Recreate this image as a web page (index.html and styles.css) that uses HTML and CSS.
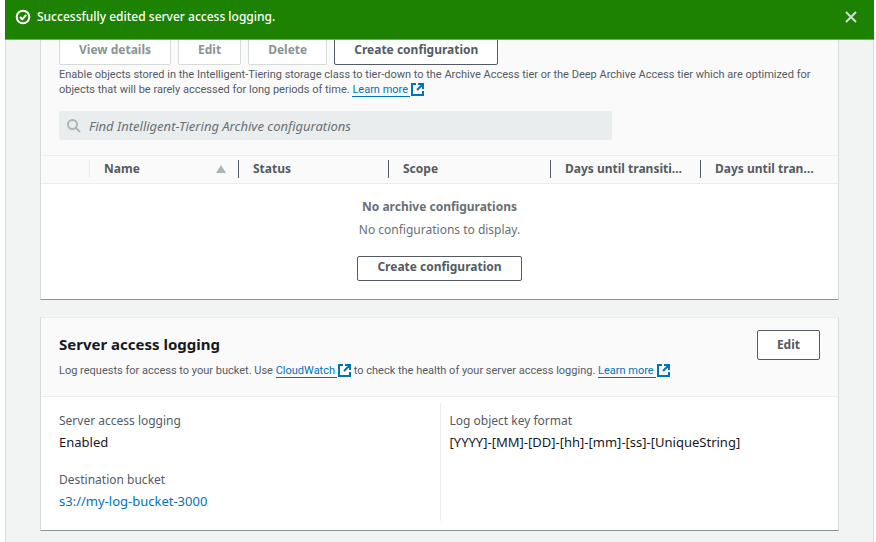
FILE: index.html
```html
<!DOCTYPE html>
<html lang="en">
<head>
  <meta charset="UTF-8" />
  <meta name="viewport" content="width=device-width, initial-scale=1.0" />
  <title>Bucket properties</title>
  <link rel="stylesheet" href="styles.css">
</head>
<body>
  <svg class="sprite" aria-hidden="true">
    <symbol id="external" viewBox="0 0 13 13">
      <path d="M5 1H1v11h11V8M7 1h5v5M12 1L6 7" />
    </symbol>
  </svg>

  <div class="flash" role="status">
    <svg class="flash-icon" viewBox="0 0 16 16">
      <circle cx="8" cy="8" r="6.3" />
      <path d="M5 8l2.300 2.300L11.200 5.800" />
    </svg>
    <span class="flash-text">Successfully edited server access logging.</span>
    <button class="flash-close" aria-label="Dismiss">
      <svg viewBox="0 0 12 12"><path d="M1 1l10 10M11 1L1 11" /></svg>
    </button>
  </div>

  <main class="page">
    <section class="card">
      <div class="card-header archive-header">
        <div class="actions">
          <button class="btn" disabled>View details</button>
          <button class="btn" disabled>Edit</button>
          <button class="btn" disabled>Delete</button>
          <button class="btn">Create configuration</button>
        </div>
        <p class="description">Enable objects stored in the Intelligent-Tiering storage class to tier-down to the Archive Access tier or the Deep Archive Access tier which are optimized for objects that will be rarely accessed for long periods of time. <a class="ext-link" href="#"><span>Learn more</span><svg><use href="#external" /></svg></a></p>
        <label class="search">
          <svg viewBox="0 0 14 14"><circle cx="5.500" cy="5.500" r="4.500" /><path d="M9 9l4 4" /></svg>
          <input type="search" aria-label="Find configurations" placeholder="Find Intelligent-Tiering Archive configurations">
        </label>
      </div>
      <table class="config-table">
        <colgroup>
          <col class="col-select"><col class="col-name"><col class="col-status"><col class="col-scope"><col class="col-days"><col>
        </colgroup>
        <thead>
          <tr>
            <th class="light"><div></div></th>
            <th><div>Name <svg class="sort" viewBox="0 0 10 8"><path d="M5 0l5 8H0z" /></svg></div></th>
            <th><div>Status</div></th>
            <th><div>Scope</div></th>
            <th><div><span>Days until transition to Archive Access tier</span></div></th>
            <th><div><span>Days until transition to Deep Archive Access tier</span></div></th>
          </tr>
        </thead>
        <tbody>
          <tr>
            <td colspan="6">
              <div class="empty">
                <strong>No archive configurations</strong>
                <span>No configurations to display.</span>
                <button class="btn btn-small">Create configuration</button>
              </div>
            </td>
          </tr>
        </tbody>
      </table>
    </section>

    <section class="card">
      <div class="card-header logging-header">
        <div class="title-row">
          <h2>Server access logging</h2>
          <button class="btn">Edit</button>
        </div>
        <p class="description">Log requests for access to your bucket. Use <a class="ext-link" href="#"><span>CloudWatch</span><svg><use href="#external" /></svg></a> to check the health of your server access logging. <a class="ext-link" href="#"><span>Learn more</span><svg><use href="#external" /></svg></a></p>
      </div>
      <div class="details">
        <dl>
          <div>
            <dt>Server access logging</dt>
            <dd>Enabled</dd>
          </div>
          <div>
            <dt>Destination bucket</dt>
            <dd><a href="#">s3://my-log-bucket-3000</a></dd>
          </div>
        </dl>
        <dl>
          <div>
            <dt>Log object key format</dt>
            <dd>[YYYY]-[MM]-[DD]-[hh]-[mm]-[ss]-[UniqueString]</dd>
          </div>
        </dl>
      </div>
    </section>
  </main>
</body>
</html>
```
FILE: styles.css
```css
* {
  box-sizing: border-box;
}

body {
  margin: 0 2px 0 5px;
  background: #fff;
  color: #16191f;
  font: 12px/20px "Noto Sans", sans-serif;
}

a {
  color: #0073bb;
  text-decoration: none;
}

.sprite {
  display: none;
}

/* Flash bar, stays over the scrolled page */
.flash {
  position: fixed;
  top: 0;
  left: 5px;
  right: 2px;
  z-index: 2;
  display: flex;
  align-items: center;
  height: 40px;
  padding: 0 17px 5px 10px;
  background: #1d8102;
  border-bottom: 1px solid #879596;
  color: #fff;
}

.flash svg {
  fill: none;
  stroke: #fff;
  stroke-width: 2;
}

.flash-icon {
  width: 16px;
  height: 16px;
  margin-right: 6px;
}

.flash-text {
  flex: 1;
  font-weight: 500;
}

.flash-close {
  padding: 0;
  border: 0;
  background: none;
  cursor: pointer;
}

.flash-close svg {
  display: block;
  width: 12px;
  height: 12px;
  stroke: #d5dbdb;
}

.page {
  min-height: 100vh;
  padding: 0 34px 11px;
  background: #f2f3f3;
  border: 1px solid #d5dbdb;
  border-width: 0 1px;
}

.card {
  background: #fff;
  border: 1px solid #d5dbdb;
  border-top-color: #eaeded;
  border-bottom-color: #879596;
}

.card + .card {
  margin-top: 17px;
}

.card-header {
  padding: 0 18px;
  background: #fafafa;
  border-bottom: 1px solid #eaeded;
}

.archive-header {
  padding-top: 34px;
  padding-bottom: 15px;
}

.actions {
  display: flex;
  gap: 7px;
}

.btn {
  height: 30px;
  padding: 0 19px 1px;
  background: #fff;
  border: 1px solid #545b64;
  border-radius: 2px;
  color: #545b64;
  font: bold 12px/20px "Noto Sans", sans-serif;
  cursor: pointer;
}

.btn:disabled {
  border-color: #d5dbdb;
  color: #879596;
  cursor: default;
}

.btn-small {
  height: 25px;
  padding-bottom: 4px;
}

.description {
  margin: 0;
  color: #545b64;
  font-family: Roboto, sans-serif;
  font-size: 11px;
  line-height: 15px;
}

.archive-header .description {
  margin: 2px 0 14px;
}

.ext-link span {
  padding-right: 2px;
  border-bottom: 1px solid #0073bb;
}

.ext-link svg {
  width: 13px;
  height: 13px;
  margin-left: 1px;
  vertical-align: -3px;
  fill: none;
  stroke: #0073bb;
  stroke-width: 2;
}

.search {
  display: flex;
  align-items: center;
  gap: 8px;
  max-width: 553px;
  height: 29px;
  padding: 0 8px;
  background: #eaeded;
  border-radius: 2px;
}

.search svg {
  width: 14px;
  height: 14px;
  fill: none;
  stroke: #aab7b8;
  stroke-width: 2;
}

.search input {
  flex: 1;
  padding: 0;
  border: 0;
  background: none;
  font: 13px/20px "Noto Sans", sans-serif;
}

.search input::placeholder {
  color: #687078;
  font-style: italic;
}

.config-table {
  width: 100%;
  border-collapse: collapse;
  table-layout: fixed;
}

.col-select {
  width: 49px;
}

.col-name {
  width: 149px;
}

.col-status,
.col-days {
  width: 150px;
}

.col-scope {
  width: 162px;
}

.config-table thead {
  background: #fafafa;
  border-bottom: 1px solid #eaeded;
}

.config-table th {
  padding: 4px 0 5px;
  color: #545b64;
  text-align: left;
}

.config-table th div {
  display: flex;
  align-items: center;
  justify-content: space-between;
  height: 18px;
  padding: 0 12px 0 14px;
  border-right: 1px solid #545b64;
}

.config-table th span {
  overflow: hidden;
  text-overflow: ellipsis;
  white-space: nowrap;
}

.config-table th.light div {
  border-color: #eaeded;
}

.config-table th:last-child div {
  padding-right: 20px;
  border: 0;
}

.sort {
  width: 10px;
  height: 8px;
  fill: #aab7b8;
}

.config-table td {
  padding: 0;
}

.empty {
  display: flex;
  flex-direction: column;
  align-items: center;
  gap: 3px;
  padding: 13px 0 18px;
  color: #687078;
}

.empty .btn {
  margin-top: 13px;
}

.logging-header {
  padding-top: 12px;
  padding-bottom: 18px;
}

.title-row {
  display: flex;
  align-items: flex-start;
  justify-content: space-between;
  margin-bottom: 3px;
}

.title-row h2 {
  margin: 0;
  font-size: 15px;
  line-height: 28px;
}

.details {
  display: grid;
  grid-template-columns: 1fr 1fr;
  padding: 6px 18px 9px;
}

.details dl {
  display: flex;
  flex-direction: column;
  gap: 18px;
  margin: 0;
  padding: 8px 0 10px;
}

.details dl + dl {
  padding-left: 9px;
  border-left: 1px solid #eaeded;
}

.details dt {
  color: #545b64;
}

.details dd {
  margin: 1px 0 0;
  font-size: 13px;
}
```
